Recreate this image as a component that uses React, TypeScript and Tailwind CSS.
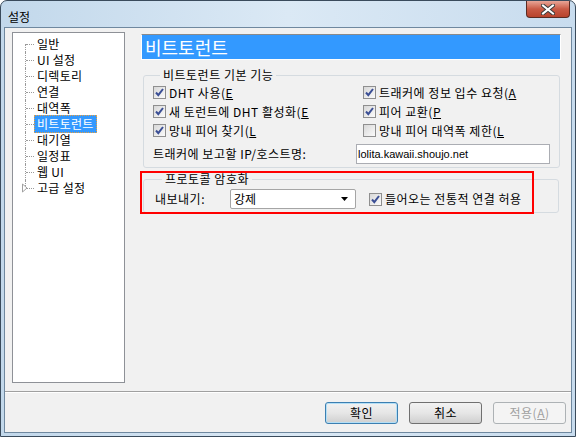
import React from 'react';

const FONT = { fontFamily: '"Noto Sans CJK KR", "Liberation Sans", sans-serif' };

const treeItems = ['일반', 'UI 설정', '디렉토리', '연결', '대역폭', '비트토런트', '대기열', '일정표', '웹 UI', '고급 설정'];

const Check: React.FC<{ checked?: boolean }> = ({ checked }) => (
  <span className="w-[13px] h-[13px] shrink-0 border border-[#8f8f8f] bg-gradient-to-br from-[#d8d8d8] to-[#fbfbfb] flex items-center justify-center">
    {checked && (
      <svg width="11" height="11" viewBox="0 0 11 11">
        <path d="M2 5.5 L4.3 8.2 L9 2" fill="none" stroke="#3b4f95" strokeWidth="2" />
      </svg>
    )}
  </span>
);

const CheckRow: React.FC<{ checked?: boolean; label: string; u: string }> = ({ checked, label, u }) => (
  <div className="flex items-center h-[19px] gap-[3px]">
    <Check checked={checked} />
    <span className="text-[12px] leading-none tracking-[0.5px] text-black whitespace-nowrap">
      {label}(<span className="underline">{u}</span>
    </span>
  </div>
);

const Button: React.FC<{ label: React.ReactNode; isDefault?: boolean; disabled?: boolean }> = ({ label, isDefault, disabled }) => (
  <button
    className={`w-[73px] h-[22px] rounded-[3px] border text-[12px] leading-none tracking-[0.5px] flex items-center justify-center ${
      disabled
        ? 'border-[#adb2b5] bg-[#f4f4f4] text-[#a0a0a0]'
        : isDefault
        ? 'border-[#3c7fb1] bg-gradient-to-b from-[#f2f2f2] via-[#e6e6e6] to-[#cfcfcf] text-black shadow-[inset_0_0_0_1px_#b4dff6]'
        : 'border-[#707070] bg-gradient-to-b from-[#f2f2f2] via-[#e6e6e6] to-[#cfcfcf] text-black'
    }`}
  >
    {label}
  </button>
);

export default function App() {
  return (
    <div style={FONT} className="w-[576px] h-[437px] flex flex-col border border-[#3a4b5c] rounded-t-[7px] overflow-hidden bg-gradient-to-r from-[#c2d8eb] via-[#dbe9f5] to-[#c8dcee]">
      {/* title bar */}
      <div className="h-[26px] shrink-0 flex items-start justify-between pl-[7px] pr-[5px]">
        <span className="text-[12px] text-black leading-none mt-[10px]">설정</span>
        <div className="w-[44px] h-[17px] rounded-b-[4px] border border-[#5b2b22] border-t-0 bg-gradient-to-b from-[#e8a597] via-[#c95a45] to-[#b8432c] flex items-center justify-center">
          <svg width="14" height="11" viewBox="0 0 14 11">
            <path d="M2 1.5 L12 9.5 M12 1.5 L2 9.5" stroke="#3b3b3b" strokeWidth="4" strokeLinecap="square" />
            <path d="M2 1.5 L12 9.5 M12 1.5 L2 9.5" stroke="#ffffff" strokeWidth="2" strokeLinecap="square" />
          </svg>
        </div>
      </div>

      {/* client area */}
      <div className="flex-1 mx-[3px] mb-[3px] border border-[#6f889f] bg-[#f1f1f1] flex flex-col">
        <div className="h-[363px] shrink-0 flex items-start pl-[7px] pt-[4px]">
          {/* tree */}
          <div className="w-[113px] h-[351px] border border-[#8e9197] bg-white pt-[3px]">
            {treeItems.map((item, i) => {
              const first = i === 0;
              const last = i === treeItems.length - 1;
              const selected = item === '비트토런트';
              return (
                <div key={item} className="h-[16px] flex items-center">
                  <div className="w-[21px] h-full relative shrink-0">
                    <div
                      className={`absolute left-[12px] border-l border-dotted border-[#9a9a9a] ${
                        first ? 'top-[8px] bottom-0' : last ? 'top-0 h-[8px]' : 'top-0 bottom-0'
                      }`}
                    />
                    <div className="absolute left-[13px] top-[8px] w-[8px] border-t border-dotted border-[#9a9a9a]" />
                    {last && (
                      <svg className="absolute left-[8px] top-[3px]" width="8" height="10" viewBox="0 0 8 10">
                        <path d="M1.5 1 L6 5 L1.5 9 Z" fill="#ffffff" stroke="#a0a0a0" />
                      </svg>
                    )}
                  </div>
                  <span
                    className={`text-[12px] leading-none tracking-[0.3px] whitespace-nowrap px-[2px] py-[2px] border ${
                      selected ? 'bg-[#3399ff] text-white border-dotted border-[#e8a040]' : 'text-black border-transparent'
                    }`}
                  >
                    {item}
                  </span>
                </div>
              );
            })}
          </div>

          {/* right panel */}
          <div className="relative ml-[16px] mt-[2px] w-[420px] flex flex-col">
            <div className="h-[26px] border border-white border-t-[#8a8a8a] bg-[#3399ff] flex items-center pl-[3px]">
              <span className="text-[18px] leading-none text-white">비트토런트</span>
            </div>

            <fieldset className="mt-[8px] mx-[2px] border border-[#d5dbe0] rounded-[3px] pl-[9px] pr-[9px] pb-[3px]">
              <legend className="ml-[7px] px-[3px] text-[12px] leading-[14px] tracking-[0.5px] text-black">비트토런트 기본 기능</legend>
              <div className="grid grid-cols-[210px_1fr] mt-[1px]">
                <CheckRow checked label="DHT 사용" u="E" />
                <CheckRow checked label="트래커에 정보 입수 요청" u="A" />
                <CheckRow checked label="새 토런트에 DHT 활성화" u="E" />
                <CheckRow checked label="피어 교환" u="P" />
                <CheckRow checked label="망내 피어 찾기" u="L" />
                <CheckRow label="망내 피어 대역폭 제한" u="L" />
              </div>
              <div className="flex items-center mt-[4px]">
                <span className="w-[203px] text-[12px] leading-none tracking-[0.5px] text-black whitespace-nowrap">트래커에 보고할 IP/호스트명:</span>
                <div className="w-[194px] h-[20px] border border-[#abadb3] bg-white flex items-center pl-[1px]">
                  <span style={{ fontFamily: '"Liberation Sans", sans-serif' }} className="text-[11px] leading-none text-black">
                    lolita.kawaii.shoujo.net
                  </span>
                </div>
              </div>
            </fieldset>

            <fieldset className="mt-[4px] mx-[2px] border border-[#d5dbe0] rounded-[3px] pl-[11px] pb-[3px]">
              <legend className="ml-[7px] px-[3px] text-[12px] leading-[14px] tracking-[0.5px] text-black">프로토콜 암호화</legend>
              <div className="flex items-center mt-[3px]">
                <span className="w-[75px] text-[12px] leading-none tracking-[0.5px] text-black">내보내기:</span>
                <div className="w-[126px] h-[20px] border border-[#a5a5a5] rounded-[2px] bg-white flex items-center justify-between pl-[3px] pr-[7px]">
                  <span className="text-[12px] leading-none text-black">강제</span>
                  <svg width="7" height="4" viewBox="0 0 7 4">
                    <path d="M0 0 H7 L3.5 4 Z" fill="#000" />
                  </svg>
                </div>
                <div className="ml-[13px] flex items-center gap-[3px]">
                  <Check checked />
                  <span className="text-[12px] leading-none tracking-[0.5px] text-black whitespace-nowrap">들어오는 전통적 연결 허용</span>
                </div>
              </div>
            </fieldset>

            {/* annotation */}
            <div className="absolute left-[-1px] top-[137px] w-[394px] h-[43px] border-2 border-[#ff0000] pointer-events-none" />
          </div>
        </div>

        <div className="border-t border-[#a0a0a0] border-b border-b-white" />

        <div className="flex-1 flex items-start justify-end pt-[9px] pr-[5px] gap-[11px]">
          <Button label="확인" isDefault />
          <Button label="취소" />
          <Button
            disabled
            label={
              <>
                적용(<span className="underline">A</span>)
              </>
            }
          />
        </div>
      </div>
    </div>
  );
}
